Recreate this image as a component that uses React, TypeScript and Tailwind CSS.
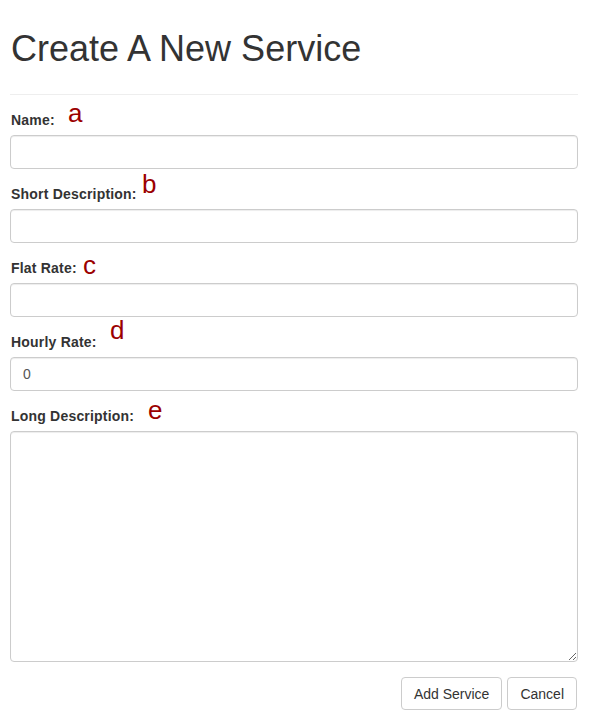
import React from 'react';

const fields: { label: string; mark: string; markClass: string; value?: string }[] = [
  { label: 'Name:', mark: 'a', markClass: 'left-[58px] top-[-10px]' },
  { label: 'Short Description:', mark: 'b', markClass: 'left-[132px] top-[-13px]' },
  { label: 'Flat Rate:', mark: 'c', markClass: 'left-[73px] top-[-6px]' },
  { label: 'Hourly Rate:', mark: 'd', markClass: 'left-[100px] top-[-15px]', value: '0' },
];

function Mark({ children, className }: { children: React.ReactNode; className: string }) {
  return (
    <span className={`absolute text-[26px] leading-[26px] text-[#9b0000] ${className}`}>
      {children}
    </span>
  );
}

export default function App() {
  return (
    <div className="min-h-[727px] bg-white pl-[10px] pr-[11px] font-['Liberation_Sans',Arial,sans-serif] text-[14px] text-[#333]">
      <div className="border-b border-[#eee] pb-[25px]">
        <h1 className="mt-[29px] pl-px text-[36px] leading-[40px] font-normal text-[#333]">Create A New Service</h1>
      </div>

      <form className="mt-[15px]" onSubmit={e => e.preventDefault()}>
        {fields.map(f => (
          <div key={f.label} className="relative mb-[15px]">
            <label className="mb-[5px] block pl-px text-[14px] leading-[20px] font-bold tracking-[0.2px]">{f.label}</label>
            <Mark className={f.markClass}>{f.mark}</Mark>
            <input
              type="text"
              defaultValue={f.value}
              className="block h-[34px] w-full rounded-[4px] border border-[#ccc] bg-white px-3 text-[14px] text-[#555] shadow-[inset_0_1px_1px_rgba(0,0,0,0.075)] outline-none"
            />
          </div>
        ))}

        <div className="relative mb-[15px]">
          <label className="mb-[5px] block pl-px text-[14px] leading-[20px] font-bold tracking-[0.2px]">Long Description:</label>
          <Mark className="left-[138px] top-[-9px]">e</Mark>
          <textarea className="block h-[231px] w-full rounded-[4px] border border-[#ccc] bg-white px-3 py-1.5 text-[14px] text-[#555] shadow-[inset_0_1px_1px_rgba(0,0,0,0.075)] outline-none" />
        </div>

        <div className="flex justify-end gap-[5px] pr-px">
          <button type="submit" className="h-[33px] rounded-[4px] border border-[#ccc] bg-white px-3 text-[14px] leading-[20px] text-[#333]">
            Add Service
          </button>
          <button type="button" className="h-[33px] rounded-[4px] border border-[#ccc] bg-white px-3 text-[14px] leading-[20px] text-[#333]">
            Cancel
          </button>
        </div>
      </form>
    </div>
  );
}
